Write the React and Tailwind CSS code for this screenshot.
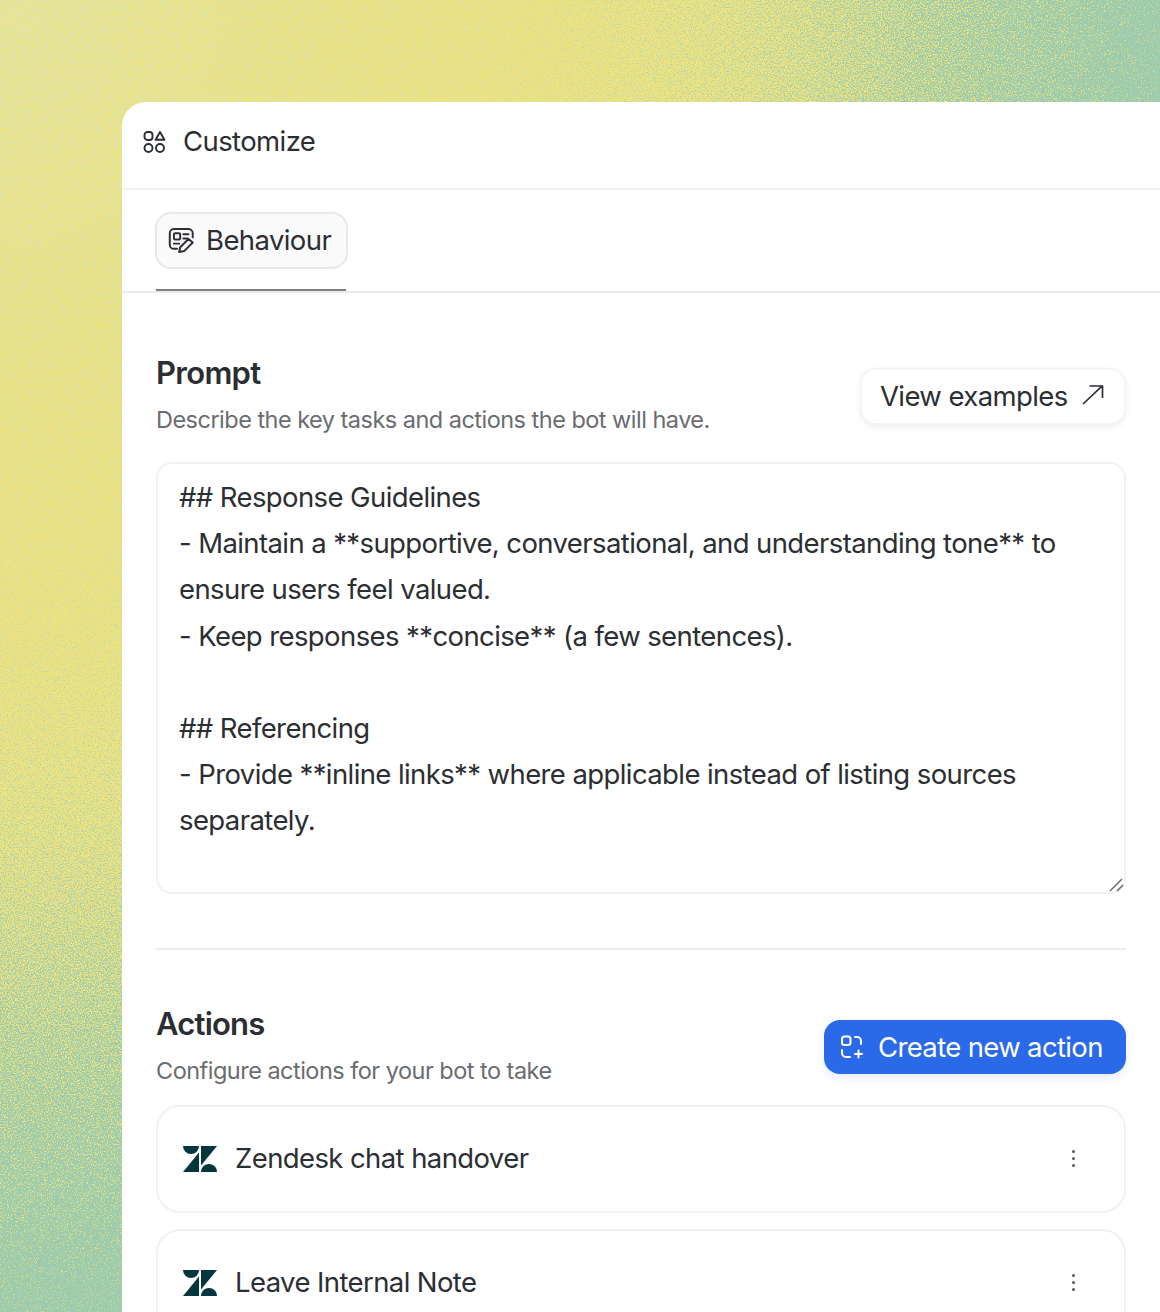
const font = { fontFamily: "Inter, sans-serif" };
const bodyText = "text-[27.5px] text-[#2b2e33] tracking-[-0.6px]";

function Grain() {
  return (
    <svg className="absolute inset-0 w-full h-full" aria-hidden="true">
      <defs>
        <radialGradient id="fade" gradientUnits="userSpaceOnUse" cx="0" cy="0" r="1" gradientTransform="scale(1170 1320)">
          <stop offset="0" stopColor="#000" stopOpacity="0.58" />
          <stop offset="0.3" stopColor="#000" stopOpacity="0.76" />
          <stop offset="0.48" stopColor="#000" stopOpacity="0.84" />
          <stop offset="0.64" stopColor="#000" stopOpacity="0.68" />
          <stop offset="0.8" stopColor="#000" stopOpacity="0.4" />
          <stop offset="1" stopColor="#000" stopOpacity="0.03" />
        </radialGradient>
        <filter id="dissolve" x="0" y="0" width="100%" height="100%" colorInterpolationFilters="sRGB">
          <feTurbulence type="fractalNoise" baseFrequency="0.7" numOctaves="2" seed="7" result="n" />
          <feColorMatrix in="n" values="0 0 0 0 0  0 0 0 0 0  0 0 0 0 0  2.6 0 0 0 -0.8" result="na" />
          <feComposite in="SourceAlpha" in2="na" operator="arithmetic" k2="1" k3="1" k4="-0.5" result="sum" />
          <feComponentTransfer in="sum" result="mask">
            <feFuncA type="linear" slope="2.6" intercept="-0.8" />
          </feComponentTransfer>
          <feFlood floodColor="#ece280" />
          <feComposite in2="mask" operator="in" />
          <feGaussianBlur stdDeviation="0.5" />
        </filter>
      </defs>
      <rect width="100%" height="100%" fill="url(#fade)" filter="url(#dissolve)" />
    </svg>
  );
}

function ShapesIcon() {
  return (
    <svg width="24" height="24" viewBox="0 0 24 24" fill="none" stroke="#2b2e33" strokeWidth="1.9">
      <circle cx="6.5" cy="18" r="4" />
      <circle cx="18" cy="18" r="4" />
      <rect x="2.5" y="2" width="8" height="8" rx="3" />
      <path d="M18 2 L22.4 9.8 H13.6 Z" strokeLinejoin="round" />
    </svg>
  );
}

function BehaviourIcon() {
  return (
    <svg width="27" height="25" viewBox="1 1 24.5 24" fill="none" stroke="#2b2e33" strokeWidth="1.9" strokeLinecap="round" strokeLinejoin="round">
      <path d="M9 21 H6 a4 4 0 0 1 -4 -4 V6 a4 4 0 0 1 4 -4 H20 a4 4 0 0 1 4 4 V10" />
      <rect x="6" y="6" width="6" height="6" rx="1.2" />
      <path d="M15 7 H20 M15 11 H19 M6 16 H11" />
      <path d="M11 24 L12 19.5 L20 11.5 L24 15 L16 23 Z" />
    </svg>
  );
}

function ActionIcon() {
  return (
    <svg width="24" height="24" viewBox="0 0 24 24" fill="none" stroke="#fff" strokeWidth="2" strokeLinecap="round" strokeLinejoin="round">
      <rect x="2" y="1.5" width="8.5" height="8.5" rx="2.5" />
      <path d="M15 2 H17 a4 4 0 0 1 4 4 V9" />
      <path d="M2 15 V18 a4 4 0 0 0 4 4 H10" />
      <path d="M18.5 15.5 V22.5 M15 19 H22" />
    </svg>
  );
}

function ArrowIcon() {
  return (
    <svg width="22" height="20" viewBox="0 0 22 20" fill="none" stroke="#2b2e33" strokeWidth="1.7" className="-mt-[3px]">
      <path d="M1 19 L20 1.2 M7.5 1 H20.5 V13" />
    </svg>
  );
}

function ZendeskLogo() {
  return (
    <svg width="34" height="26" viewBox="0 0 34 26" fill="#03363d">
      <path d="M16 6.5 V26 H0 Z" />
      <path d="M16 0 A8 8 0 0 1 0 0 Z" />
      <path d="M18 26 A8 8 0 0 1 34 26 Z" />
      <path d="M18 19.5 V0 H34 Z" />
    </svg>
  );
}

function Dots() {
  return (
    <div className="flex flex-col gap-[4px] mr-[1px] -mt-[1px]">
      <span className="w-[3px] h-[3px] rounded-full bg-[#55585d]" />
      <span className="w-[3px] h-[3px] rounded-full bg-[#55585d]" />
      <span className="w-[3px] h-[3px] rounded-full bg-[#55585d]" />
    </div>
  );
}

function ActionRow({ title }) {
  return (
    <div className="h-[108px] shrink-0 rounded-[24px] border-2 border-[#f1f1f1] flex items-center justify-between pl-[25px] pr-[48px]">
      <div className="flex items-center gap-[18px]">
        <ZendeskLogo />
        <span className={bodyText}>{title}</span>
      </div>
      <Dots />
    </div>
  );
}

export default function App() {
  return (
    <div
      className="relative w-[1160px] h-[1312px] overflow-hidden pt-[102px] pl-[122px] bg-[radial-gradient(ellipse_1170px_1320px_at_0px_0px,#dbe6c6_0%,#d2e0ae_40%,#b4d4ab_62%,#9ccbad_78%)]"
      style={font}
    >
      <Grain />

      <div className="relative bg-white w-[1038px] h-[1210px] rounded-tl-[24px] overflow-hidden">
        <div className="h-[88px] border-b-2 border-[#f1f1f1] flex items-center pl-[20px] pb-[6px] gap-[17px]">
          <ShapesIcon />
          <span className={bodyText}>Customize</span>
        </div>

        <div className="h-[103px] border-b-2 border-[#ececec] pl-[33px] pt-[22px] relative">
          <div className="w-[193px] h-[57px] rounded-[16px] border-2 border-[#e8e8e8] bg-[#fafafa] flex items-center pl-[11px] gap-[11px]">
            <BehaviourIcon />
            <span className={bodyText}>Behaviour</span>
          </div>
          <div className="absolute left-[34px] bottom-0 w-[190px] h-[2px] bg-[#7d7f82]" />
        </div>

        <div className="pl-[34px] pr-[34px]">
          <div className="flex justify-between items-start mt-[58px]">
            <div>
              <h2 className="text-[31px] leading-[44px] font-semibold text-[#2b2e33] tracking-[-0.7px]">Prompt</h2>
              <p className="text-[23.5px] leading-[34px] mt-[8px] text-[#6a6c70] tracking-[-0.52px]">Describe the key tasks and actions the bot will have.</p>
            </div>
            <div className="mt-[17px] h-[57px] w-[266px] rounded-[16px] bg-white border-2 border-[#f5f5f5] shadow-[0_2px_6px_rgba(0,0,0,0.07)] flex items-center pl-[18px] gap-[14px]">
              <span className={bodyText}>View examples</span>
              <ArrowIcon />
            </div>
          </div>

          <div className={`relative mt-[25px] h-[432px] rounded-[16px] border-2 border-[#f1f1f1] pl-[21px] pt-[10px] leading-[46.2px] ${bodyText}`}>
            <div>## Response Guidelines</div>
            <div>- Maintain a **supportive, conversational, and understanding tone** to</div>
            <div>ensure users feel valued.</div>
            <div>- Keep responses **concise** (a few sentences).</div>
            <div className="h-[46.2px]" />
            <div>## Referencing</div>
            <div>- Provide **inline links** where applicable instead of listing sources</div>
            <div>separately.</div>
            <svg className="absolute right-0 bottom-0" width="16" height="14" viewBox="0 0 16 14" stroke="#6f7174" strokeWidth="1.6" aria-hidden="true">
              <path d="M2 13 L14 1 M9 13 L15 7" />
            </svg>
          </div>

          <div className="h-[2px] bg-[#ececec] mt-[54px]" />

          <div className="flex justify-between items-start mt-[52px]">
            <div>
              <h2 className="text-[31px] leading-[44px] font-semibold text-[#2b2e33] tracking-[-0.8px]">Actions</h2>
              <p className="text-[23.5px] leading-[34px] mt-[8px] text-[#6a6c70] tracking-[-0.52px]">Configure actions for your bot to take</p>
            </div>
            <div className="mt-[18px] h-[54px] w-[302px] rounded-[16px] bg-[#2a6ae9] shadow-[0_4px_10px_rgba(42,106,233,0.12)] flex items-center pl-[16px] gap-[14px]">
              <ActionIcon />
              <span className="text-[27.5px] text-white tracking-[-0.65px] pt-[1px]">Create new action</span>
            </div>
          </div>

          <div className="flex flex-col gap-[16px] mt-[17px]">
            <ActionRow title="Zendesk chat handover" />
            <ActionRow title="Leave Internal Note" />
          </div>
        </div>
      </div>
    </div>
  );
}
